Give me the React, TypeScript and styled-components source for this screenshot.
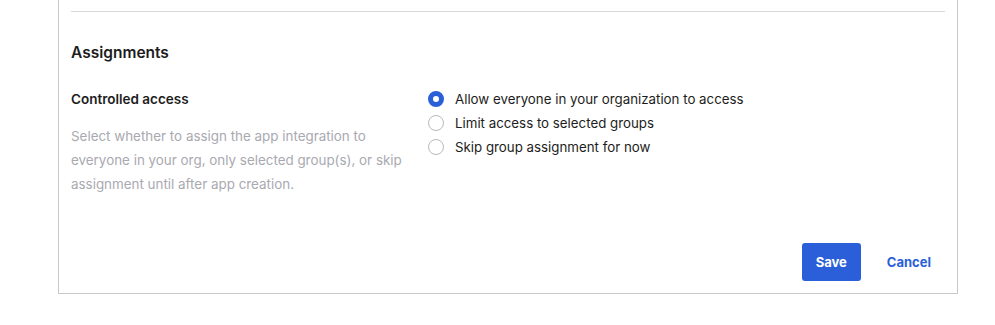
import React, { useState } from 'react';
import styled, { createGlobalStyle } from 'styled-components';

const GlobalStyle = createGlobalStyle`
    body {
        margin: 0;
        background: #ffffff;
        font-family: Inter, "Noto Sans", sans-serif;
        color: #1d1d21;
    }
`;

const Page = styled.div`
    padding: 0 37px 0 58px;
`;

const Card = styled.div`
    width: 900px;
    box-sizing: border-box;
    border: 1px solid #c7c7cc;
    border-top: none;
    padding: 11px 12px 12px;
`;

const Divider = styled.hr`
    margin: 0;
    border: none;
    border-top: 1px solid #d7d7dc;
`;

const SectionTitle = styled.h2`
    margin: 31px 0 0;
    font-size: 15.5px;
    line-height: 20px;
    font-weight: 600;
`;

const FieldRow = styled.div`
    display: flex;
    margin-top: 24px;
`;

const FieldInfo = styled.div`
    width: 357px;
    padding-top: 2px;
`;

const FieldLabel = styled.div`
    font-size: 13.5px;
    line-height: 20px;
    font-weight: 600;
`;

const FieldHint = styled.p`
    margin: 15px 0 0;
    font-size: 13.4px;
    line-height: 24px;
    color: #a9a9b0;
    max-width: 340px;
`;

const RadioGroup = styled.div`
    display: flex;
    flex-direction: column;
`;

const RadioRow = styled.label`
    display: flex;
    align-items: center;
    height: 24px;
    font-size: 13.3px;
    cursor: pointer;
`;

const RadioDot = styled.span<{ $checked: boolean }>`
    width: 16px;
    height: 16px;
    box-sizing: border-box;
    border-radius: 50%;
    margin-right: 11px;
    border: ${(p) => (p.$checked ? '5px solid #2b5fd9' : '1.5px solid #b9b9c0')};
    background: #ffffff;
`;

const Actions = styled.div`
    display: flex;
    justify-content: flex-end;
    align-items: center;
    gap: 12px;
    margin-top: 47px;
`;

const PrimaryButton = styled.button`
    height: 38px;
    padding: 0 14px;
    border: none;
    border-radius: 3px;
    background: #2b5fd9;
    color: #ffffff;
    font-family: inherit;
    font-size: 13px;
    font-weight: 700;
`;

const LinkButton = styled.button`
    height: 38px;
    padding: 0 14px;
    border: none;
    background: transparent;
    color: #2b5fd9;
    font-family: inherit;
    font-size: 13px;
    font-weight: 700;
`;

const options = [
    'Allow everyone in your organization to access',
    'Limit access to selected groups',
    'Skip group assignment for now',
];

export default function App() {
    const [selected, setSelected] = useState(0);

    return (
        <Page>
            <GlobalStyle />
            <Card>
                <Divider />
                <SectionTitle>Assignments</SectionTitle>
                <FieldRow>
                    <FieldInfo>
                        <FieldLabel>Controlled access</FieldLabel>
                        <FieldHint>
                            Select whether to assign the app integration to everyone in your org,
                            only selected group(s), or skip assignment until after app creation.
                        </FieldHint>
                    </FieldInfo>
                    <RadioGroup>
                        {options.map((option, i) => (
                            <RadioRow key={option} onClick={() => setSelected(i)}>
                                <RadioDot $checked={selected === i} />
                                {option}
                            </RadioRow>
                        ))}
                    </RadioGroup>
                </FieldRow>
                <Actions>
                    <PrimaryButton>Save</PrimaryButton>
                    <LinkButton>Cancel</LinkButton>
                </Actions>
            </Card>
        </Page>
    );
}
